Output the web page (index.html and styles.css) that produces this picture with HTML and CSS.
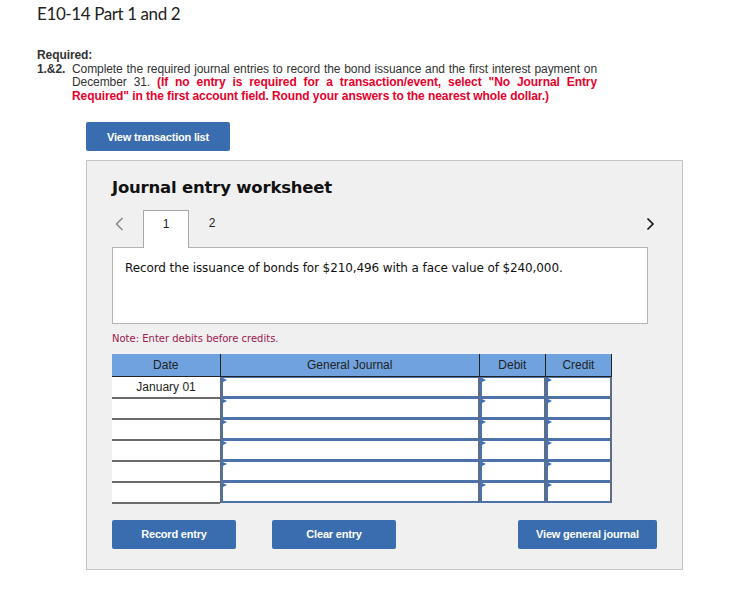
FILE: index.html
```html
<!DOCTYPE html>
<html lang="en">
<head>
    <meta charset="UTF-8">
    <meta name="viewport" content="width=device-width, initial-scale=1.0">
    <title>E10-14 Part 1 and 2</title>
    <link rel="stylesheet" href="styles.css">
</head>
<body>
<div class="page">
    <h1 class="title">E10-14 Part 1 and 2</h1>

    <!-- Enunciado -->
    <div class="required">
        <p class="req-label">Required:</p>
        <div class="req-item">
            <span class="req-num">1.&amp;2.</span>
            <p class="req-text">Complete the required journal entries to record the bond issuance and the first interest payment on December 31. <span class="req-note">(If no entry is required for a transaction/event, select "No Journal Entry Required" in the first account field. Round your answers to the nearest whole dollar.)</span></p>
        </div>
    </div>

    <button class="btn btn-list">View transaction list</button>

    <!-- Worksheet -->
    <section class="worksheet">
        <h2 class="ws-title">Journal entry worksheet</h2>

        <div class="ws-nav">
            <span class="chev chev-prev">
                <svg width="9" height="14" viewBox="0 0 9 14"><path d="M7.5 1 L1.5 7 L7.5 13" fill="none" stroke="#8a8a8a" stroke-width="1.6"/></svg>
            </span>
            <div class="tab active">1</div>
            <div class="tab">2</div>
            <span class="chev chev-next">
                <svg width="9" height="14" viewBox="0 0 9 14"><path d="M1.5 1.5 L7 7 L1.5 12.5" fill="none" stroke="#111" stroke-width="1.6"/></svg>
            </span>
        </div>

        <div class="ws-box">
            <p>Record the issuance of bonds for $210,496 with a face value of $240,000.</p>
        </div>

        <p class="ws-note">Note: Enter debits before credits.</p>

        <table class="journal">
            <thead>
                <tr>
                    <th class="col-date">Date</th>
                    <th class="col-acc">General Journal</th>
                    <th class="col-num">Debit</th>
                    <th class="col-num">Credit</th>
                </tr>
            </thead>
            <tbody>
                <tr>
                    <td class="date">January 01</td>
                    <td class="inp"><div class="field"></div></td>
                    <td class="inp"><div class="field"></div></td>
                    <td class="inp"><div class="field"></div></td>
                </tr>
                <tr>
                    <td class="date"></td>
                    <td class="inp"><div class="field"></div></td>
                    <td class="inp"><div class="field"></div></td>
                    <td class="inp"><div class="field"></div></td>
                </tr>
                <tr>
                    <td class="date"></td>
                    <td class="inp"><div class="field"></div></td>
                    <td class="inp"><div class="field"></div></td>
                    <td class="inp"><div class="field"></div></td>
                </tr>
                <tr>
                    <td class="date"></td>
                    <td class="inp"><div class="field"></div></td>
                    <td class="inp"><div class="field"></div></td>
                    <td class="inp"><div class="field"></div></td>
                </tr>
                <tr>
                    <td class="date"></td>
                    <td class="inp"><div class="field"></div></td>
                    <td class="inp"><div class="field"></div></td>
                    <td class="inp"><div class="field"></div></td>
                </tr>
                <tr>
                    <td class="date"></td>
                    <td class="inp"><div class="field"></div></td>
                    <td class="inp"><div class="field"></div></td>
                    <td class="inp"><div class="field"></div></td>
                </tr>
            </tbody>
        </table>

        <div class="ws-actions">
            <button class="btn btn-action">Record entry</button>
            <button class="btn btn-action">Clear entry</button>
            <button class="btn btn-action btn-wide">View general journal</button>
        </div>
    </section>
</div>
</body>
</html>
```

FILE: styles.css
```css
/* Reset */
* {
    margin: 0;
    padding: 0;
    box-sizing: border-box;
}

body {
    background: #fff;
    color: #333;
    font-family: "Liberation Sans", Arial, sans-serif;
}

.page {
    padding: 4px 37px 0 37px;
}

.title {
    font-family: Lato, "Liberation Sans", sans-serif;
    font-size: 17px;
    font-weight: normal;
    letter-spacing: -0.4px;
    color: #222;
    line-height: 20px;
}

/* Enunciado */
.required {
    margin-top: 25px;
    width: 560px;
    font-size: 12px;
    line-height: 13.5px;
    letter-spacing: -0.08px;
}

.req-label {
    font-weight: bold;
}

.req-item {
    display: flex;
}

.req-num {
    font-weight: bold;
    width: 35px;
    flex-shrink: 0;
}

.req-text {
    text-align: justify;
}

.req-note {
    color: #e8002c;
    font-weight: bold;
}

/* Botões */
.btn {
    display: block;
    border: none;
    border-radius: 2px;
    background: #3a6cb0;
    color: #fff;
    font-family: "Liberation Sans", Arial, sans-serif;
    font-size: 11px;
    font-weight: bold;
    letter-spacing: -0.2px;
    cursor: pointer;
}

.btn-list {
    margin: 19px 0 0 49px;
    width: 144px;
    height: 29px;
}

/* Worksheet */
.worksheet {
    margin: 9px 0 0 49px;
    width: 597px;
    height: 410px;
    background: #f0f0f0;
    border: 1px solid #c4c4c4;
    padding: 17px 34px 0 25px;
}

.ws-title {
    font-family: "DejaVu Sans", Verdana, sans-serif;
    font-size: 16.5px;
    letter-spacing: -0.2px;
    font-weight: bold;
    color: #111;
    line-height: 20px;
}

.ws-nav {
    display: flex;
    align-items: flex-start;
    margin-top: 12px;
    width: 548px;
    height: 37px;
}

.chev {
    display: flex;
    width: 31px;
    padding: 7px 0 0 3px;
}

.chev-next {
    margin-left: auto;
    width: 14px;
    padding: 7px 0 0 0;
}

.tab {
    width: 46px;
    height: 37px;
    padding-top: 6px;
    text-align: center;
    font-size: 12px;
    color: #222;
}

.tab.active {
    background: #fff;
    border: 1px solid #a8a8a8;
    border-bottom: none;
    height: 38px;
    position: relative;
    z-index: 1;
}

.ws-box {
    background: #fff;
    border: 1px solid #b4b4b4;
    width: 536px;
    height: 77px;
    padding: 13px 12px 0 12px;
}

.ws-box p {
    font-family: "DejaVu Sans", Verdana, sans-serif;
    font-size: 12px;
    letter-spacing: -0.1px;
    color: #111;
}

.ws-note {
    margin-top: 9px;
    font-family: "DejaVu Sans", Verdana, sans-serif;
    font-size: 10px;
    color: #a0184e;
}

/* Tabela do diário */
.journal {
    margin-top: 10px;
    width: 500px;
    border-collapse: collapse;
    font-size: 12px;
    color: #222;
}

.journal th {
    background: #6fa2de;
    height: 22px;
    font-weight: normal;
    border-left: 1px solid #222;
    border-bottom: 1px solid #222;
}

.journal th:first-child {
    border-left: none;
}

.journal th:last-child {
    border-right: 1px solid #222;
}

.col-date {
    width: 108px;
}

.col-acc {
    width: 259px;
}

.col-num {
    width: 66px;
}

.journal td {
    height: 21px;
    padding: 0;
    background: #fff;
}

.journal td.date {
    text-align: center;
    border-bottom: 2px solid #6a6a6a;
}

.journal td.inp {
    background: #6a6a6a;
    padding: 0 0 0 1px;
}

.journal td.inp:last-child {
    padding-right: 1px;
}

.field {
    position: relative;
    height: 21px;
    background: #fff;
    border: 1px solid #4d71a9;
    border-width: 1px 1px 2px 2px;
}

/* triângulo azul do campo */
.field::before {
    content: "";
    position: absolute;
    top: 0;
    left: 0;
    border-top: 2px solid transparent;
    border-bottom: 2px solid transparent;
    border-left: 4px solid #3b6fb6;
}

.ws-actions {
    display: flex;
    margin-top: 16px;
    width: 545px;
}

.btn-action {
    width: 124px;
    height: 29px;
    font-size: 11px;
}

.btn-action + .btn-action {
    margin-left: 36px;
}

.btn-wide {
    width: 139px;
    margin-left: auto !important;
}
```
